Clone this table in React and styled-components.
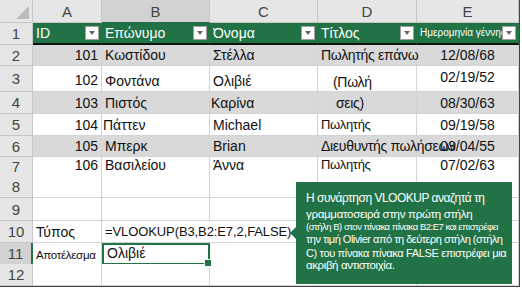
import React from "react"
import styled, { createGlobalStyle } from "styled-components"

const GREEN = "#217346"
const BAND = "#d9d9d9"
const GRID = "#d4d4d4"

const GlobalStyle = createGlobalStyle`
  * { box-sizing: border-box; }
  body {
    margin: 0;
    background: #fff;
    font-family: "Liberation Sans", Arial, sans-serif;
  }
`

const Frame = styled.div`
  position: relative;
  width: 520px;
  height: 287px;
  border-right: 1px solid #444;
  border-bottom: 1px solid #444;
  overflow: hidden;
`

const Row = styled.div`
  display: grid;
  grid-template-columns: 33px 69px 108px 108px 99px 102px;
  height: ${(p) => p.$h}px;
`

const ColHead = styled.div`
  display: flex;
  align-items: center;
  justify-content: center;
  background: ${(p) => (p.$active ? "#d2d2d2" : "#e6e6e6")};
  border-right: 1px solid #c6c6c6;
  border-bottom: 1px solid ${(p) => (p.$active ? GREEN : "#c6c6c6")};
  color: #444;
  font-size: 15px;
`

const Corner = styled(ColHead)`
  position: relative;
  &::after {
    content: "";
    position: absolute;
    right: 3px;
    bottom: 3px;
    border-left: 13px solid transparent;
    border-bottom: 13px solid #bcbcbc;
  }
`

const RowNum = styled.div`
  display: flex;
  align-items: center;
  justify-content: center;
  background: ${(p) => (p.$active ? "#d2d2d2" : "#e6e6e6")};
  border-right: ${(p) => (p.$active ? `2px solid ${GREEN}` : "1px solid #c6c6c6")};
  border-bottom: 1px solid #c6c6c6;
  color: #444;
  font-size: 15px;
`

const Cell = styled.div`
  position: relative;
  display: flex;
  align-items: flex-end;
  justify-content: ${(p) =>
    p.$align === "right" ? "flex-end" : p.$align === "center" ? "center" : "flex-start"};
  padding: 0 3px ${(p) => p.$pb ?? 2}px ${(p) => p.$indent ?? 3}px;
  background: ${(p) => p.$bg || "#fff"};
  border-right: 1px solid ${(p) => (p.$bg === GREEN ? GREEN : GRID)};
  border-bottom: ${(p) => (p.$thick ? "2px solid #111" : `1px solid ${GRID}`)};
  grid-column: ${(p) => (p.$span ? `span ${p.$span}` : "auto")};
  color: #111;
  font-size: ${(p) => p.$size || 14}px;
  line-height: 1.15;
  white-space: nowrap;
  min-width: 0;
  overflow: ${(p) => (p.$clip ? "hidden" : "visible")};
`

const Text = styled.span`
  position: relative;
  z-index: 1;
  letter-spacing: ${(p) => p.$ls || 0}px;
`

const HeadCell = styled(Cell)`
  align-items: center;
  padding: 0 2px 0 3px;
  color: #fff;
  overflow: hidden;
`

const HeadLabel = styled.span`
  flex: 1;
  min-width: 0;
  overflow: hidden;
`

const Filter = styled.span`
  flex: none;
  width: 14px;
  height: 14px;
  background: #fff;
  border: 1px solid #a0a0a0;
  display: flex;
  align-items: center;
  justify-content: center;
  &::after {
    content: "";
    border-left: 3px solid transparent;
    border-right: 3px solid transparent;
    border-top: 4px solid #666;
  }
`

const Selected = styled(Cell)`
  border: 2px solid ${GREEN};
  &::after {
    content: "";
    position: absolute;
    right: -4px;
    bottom: -4px;
    width: 6px;
    height: 6px;
    background: ${GREEN};
    border: 1px solid #fff;
    z-index: 2;
  }
`

const Callout = styled.div`
  position: absolute;
  left: 296px;
  top: 182px;
  width: 216px;
  height: 102px;
  background: ${GREEN};
  color: #fff;
  padding: 8px 0 0 10px;
  overflow: hidden;
`

const Pointer = styled.div`
  position: absolute;
  left: 290px;
  top: 227px;
  border-top: 6px solid transparent;
  border-bottom: 6px solid transparent;
  border-right: 6px solid ${GREEN};
`

const Line = styled.div`
  font-size: ${(p) => p.$size}px;
  line-height: ${(p) => p.$lh}px;
  letter-spacing: ${(p) => p.$ls || 0}px;
  white-space: nowrap;
`

const headers = ["ID", "Επώνυμο", "Όνομα", "Τίτλος"]

const people = [
  { id: 101, last: "Κωστίδου", first: "Στέλλα", title: "Πωλητής επάνω", date: "12/08/68", h: 21 },
  { id: 102, last: "Φοντάνα", first: "Ολιβιέ", title: "(Πωλή", date: "02/19/52", h: 26, indent: 15 },
  { id: 103, last: "Πιστός", first: "Καρίνα", title: "σεις)", date: "08/30/63", h: 22, indent: 18, firstIndent: 1 },
  { id: 104, last: "Πάττεν", first: "Michael", title: "Πωλητής", date: "09/19/58", h: 22, lastIndent: 1, titleSize: 13 },
  { id: 105, last: "Μπερκ", first: "Brian", title: "Διευθυντής πωλήσεων", date: "03/04/55", h: 21 },
  { id: 106, last: "Βασιλείου", first: "Άννα", title: "Πωλητής", date: "07/02/63", h: 18, titleSize: 13 },
]

const App = () => (
  <>
    <GlobalStyle />
    <Frame>
      <Row $h={23}>
        <Corner />
        <ColHead>A</ColHead>
        <ColHead $active>B</ColHead>
        <ColHead>C</ColHead>
        <ColHead>D</ColHead>
        <ColHead>E</ColHead>
      </Row>

      <Row $h={22}>
        <RowNum>1</RowNum>
        {headers.map((h) => (
          <HeadCell key={h} $bg={GREEN} $thick>
            <HeadLabel>{h}</HeadLabel>
            <Filter />
          </HeadCell>
        ))}
        <HeadCell $bg={GREEN} $thick $size={10}>
          <HeadLabel>Ημερομηνία γέννησ</HeadLabel>
          <Filter />
        </HeadCell>
      </Row>

      {people.map((p, i) => {
        const bg = i % 2 === 0 ? BAND : "#fff"
        const last = i === people.length - 1
        return (
          <Row key={p.id} $h={p.h}>
            <RowNum>{i + 2}</RowNum>
            <Cell $bg={bg} $thick={last} $align="right" $pb={p.h > 24 ? 3 : 2}>
              <Text>{p.id}</Text>
            </Cell>
            <Cell $bg={bg} $thick={last} $indent={p.lastIndent}>
              <Text>{p.last}</Text>
            </Cell>
            <Cell $bg={bg} $thick={last} $indent={p.firstIndent}>
              <Text>{p.first}</Text>
            </Cell>
            <Cell $bg={bg} $thick={last} $indent={p.indent} $size={p.titleSize} $pb={p.h > 24 ? 1 : 2}>
              <Text $ls={-0.3}>{p.title}</Text>
            </Cell>
            <Cell $bg={bg} $thick={last} $align="center" $pb={p.h > 24 ? 6 : 2}>
              <Text>{p.date}</Text>
            </Cell>
          </Row>
        )
      })}

      <Row $h={23}>
        <RowNum>8</RowNum>
        <Cell /><Cell /><Cell /><Cell /><Cell />
      </Row>
      <Row $h={23}>
        <RowNum>9</RowNum>
        <Cell /><Cell /><Cell /><Cell /><Cell />
      </Row>
      <Row $h={22}>
        <RowNum>10</RowNum>
        <Cell>Τύπος</Cell>
        <Cell $span={2} $size={13}>
          <Text $ls={-0.1}>=VLOOKUP(B3,B2:E7,2,FALSE)</Text>
        </Cell>
        <Cell /><Cell />
      </Row>
      <Row $h={21}>
        <RowNum $active>11</RowNum>
        <Cell $size={11.5}>
          <Text $ls={-0.3}>Αποτέλεσμα</Text>
        </Cell>
        <Selected>Ολιβιέ</Selected>
        <Cell /><Cell /><Cell />
      </Row>
      <Row $h={22}>
        <RowNum>12</RowNum>
        <Cell /><Cell /><Cell /><Cell /><Cell />
      </Row>

      <Pointer />
      <Callout>
        <Line $size={12} $lh={17} $ls={-0.5}>Η συνάρτηση VLOOKUP αναζητά τη</Line>
        <Line $size={11.5} $lh={14} $ls={-0.3}>γραμματοσειρά στην πρώτη στήλη</Line>
        <Line $size={9.5} $lh={11} $ls={-0.5}>(στήλη B) στον πίνακα πίνακα B2:E7 και επιστρέφει</Line>
        <Line $size={11} $lh={15} $ls={-0.5}>την τιμή Olivier από τη δεύτερη στήλη (στήλη</Line>
        <Line $size={11} $lh={12} $ls={-0.35}>C) του πίνακα πίνακα FALSE επιστρέφει μια</Line>
        <Line $size={11.5} $lh={12} $ls={-0.4}>ακριβή αντιστοιχία.</Line>
      </Callout>
    </Frame>
  </>
)

export default App
